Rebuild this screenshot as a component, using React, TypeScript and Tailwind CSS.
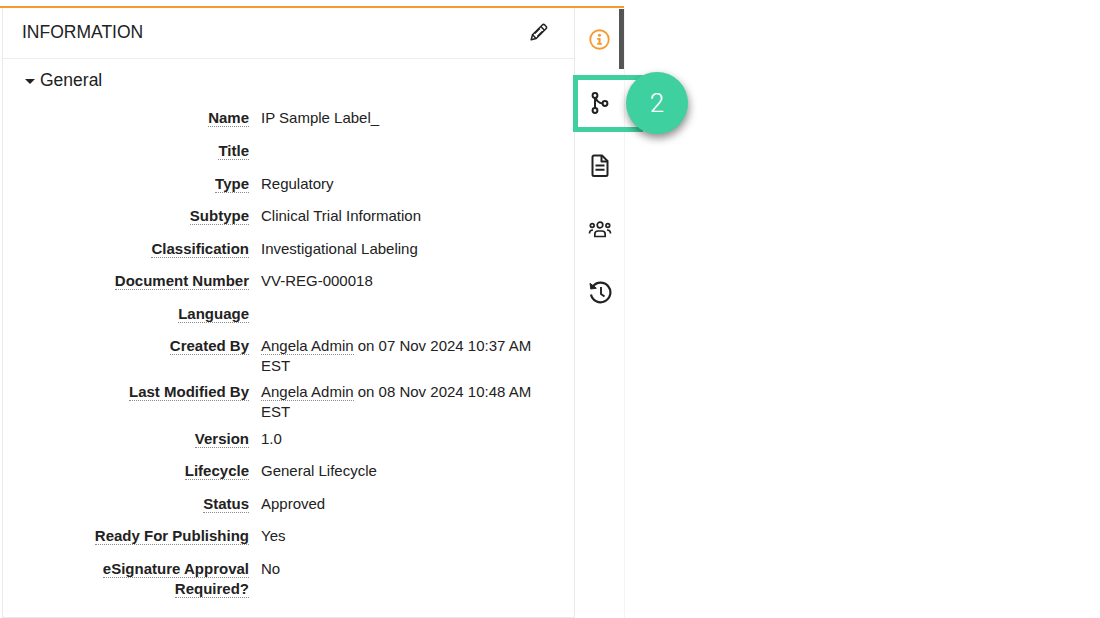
import { Fragment } from 'react'

type Field = { label: string; value?: string; owner?: string; tail?: string }

const fields: Field[] = [
  { label: 'Name', value: 'IP Sample Label_' },
  { label: 'Title' },
  { label: 'Type', value: 'Regulatory' },
  { label: 'Subtype', value: 'Clinical Trial Information' },
  { label: 'Classification', value: 'Investigational Labeling' },
  { label: 'Document Number', value: 'VV-REG-000018' },
  { label: 'Language' },
  { label: 'Created By', owner: 'Angela Admin', tail: ' on 07 Nov 2024 10:37 AM EST' },
  { label: 'Last Modified By', owner: 'Angela Admin', tail: ' on 08 Nov 2024 10:48 AM EST' },
  { label: 'Version', value: '1.0' },
  { label: 'Lifecycle', value: 'General Lifecycle' },
  { label: 'Status', value: 'Approved' },
  { label: 'Ready For Publishing', value: 'Yes' },
  { label: 'eSignature Approval Required?', value: 'No' },
]

const dotted = 'border-b border-dotted border-[#8a8a8a]'

function InfoIcon() {
  return (
    <svg width="21" height="21" viewBox="0 0 22 22" fill="none">
      <circle cx="11" cy="11" r="9.700" stroke="#f59a2f" strokeWidth="1.900" />
      <circle cx="11" cy="6.600" r="1.600" fill="#f59a2f" />
      <path d="M8.600 9.400h3.500v5.200h1.400v1.800H8.600v-1.800h1.300v-3.400H8.600z" fill="#f59a2f" />
    </svg>
  )
}

function BranchIcon() {
  return (
    <svg width="18" height="22" viewBox="0 0 18 22" fill="none" stroke="#222" strokeWidth="2">
      <circle cx="4" cy="3.500" r="2.400" />
      <circle cx="4" cy="18.500" r="2.400" />
      <circle cx="14" cy="11.500" r="2.400" />
      <path d="M4 5.900v10.200" />
      <path d="M4.800 6c.8 2.800 2.800 4.800 6.800 5.500" />
    </svg>
  )
}

function DocIcon() {
  return (
    <svg width="18" height="23" viewBox="0 0 18 23" fill="none" stroke="#222" strokeWidth="2" strokeLinejoin="round">
      <path d="M3 1.500h8l5.500 5.500v13.500a1.500 1.500 0 0 1-1.500 1.500H3a1.500 1.500 0 0 1-1.500-1.500V3A1.500 1.500 0 0 1 3 1.500z" />
      <path d="M10.500 1.500v6h6" />
      <path d="M4.500 11.500h9M4.500 15.700h9" />
    </svg>
  )
}

function UsersIcon() {
  return (
    <svg width="24" height="18" viewBox="0 -1 24 18" fill="none" stroke="#222" strokeWidth="1.700">
      <circle cx="12" cy="4" r="2.800" />
      <circle cx="4.200" cy="4.500" r="1.900" />
      <circle cx="19.800" cy="4.500" r="1.900" />
      <path d="M6.800 15.500v-2.300c0-2 1.500-3.200 3.400-3.200h3.600c1.900 0 3.400 1.200 3.400 3.200v2.300z" strokeLinejoin="round" />
      <path d="M1.500 12.500c0-2 1.200-3.500 3.500-3.500M22.500 12.500c0-2-1.200-3.500-3.500-3.500" />
    </svg>
  )
}

function HistoryIcon() {
  return (
    <svg width="24" height="24" viewBox="0 -0.500 24 24" fill="none" stroke="#222" strokeWidth="2.200">
      <path d="M4.800 6A9.800 9.800 0 1 1 3 14" />
      <path d="M2 2.800l.8 5.700 5.500-.8z" fill="#222" strokeWidth="1" strokeLinejoin="round" />
      <path d="M13 6.500v7l3.500 2.500" strokeWidth="1.900" />
    </svg>
  )
}

function PencilIcon() {
  return (
    <svg width="18" height="18" viewBox="0 0 18 18" fill="none" stroke="#222" strokeWidth="1.500" strokeLinejoin="round">
      <path d="M1.200 16.800l1.300-5L12.300 2a1.800 1.800 0 0 1 2.500 0l1.200 1.200a1.800 1.800 0 0 1 0 2.500L6.200 15.500z" />
      <path d="M2.500 11.800l3.700 3.700M10.800 3.500l3.700 3.700M4.800 10.500l5-5M7.500 13.200l5-5" />
    </svg>
  )
}

export default function App() {
  return (
    <div className="relative h-[618px] w-[1100px] overflow-hidden bg-white pt-[6px] font-['Liberation_Sans',Arial,sans-serif] text-[#222]">
      <div className="flex h-[612px] w-[624px] border-t-2 border-[#f59a2f]">
        <div className="ml-[2px] flex h-[610px] w-[573px] flex-col border-x border-b border-[#e9e9e9]">
          <div className="flex h-[51px] shrink-0 items-center justify-between border-b border-[#ececec] pl-[19px] pr-[26px]">
            <h2 className="pb-[2px] text-[17.500px] leading-[24px]">INFORMATION</h2>
            <button className="mb-[3px]"><PencilIcon /></button>
          </div>
          <div className="flex items-center pl-[22px] pt-[9px]">
            <span className="mr-[5px] mt-[3px] h-0 w-0 border-x-[5px] border-t-[5px] border-x-transparent border-t-[#222]" />
            <span className="text-[17.500px] leading-[24px]">General</span>
          </div>
          <div className="mt-[16px] grid grid-cols-[246px_1fr] text-[15px] leading-[20px]">
            {fields.map(f => (
              <Fragment key={f.label}>
                <div className={`pl-[80px] text-right font-bold ${f.label === 'Name' ? 'pb-[13px]' : 'pb-[12.500px]'}`}>
                  <span className={dotted}>{f.label}</span>
                </div>
                <div className={`pl-[12px] pr-[30px] ${f.label === 'Created By' ? 'pb-[6px]' : 'pb-[6.500px]'}`}>
                  {f.owner && <span className={dotted}>{f.owner}</span>}
                  {f.tail}
                  {f.value}
                </div>
              </Fragment>
            ))}
          </div>
        </div>
        <div className="flex w-[49px] flex-col shadow-[1px_0_0_#f4f4f4]">
          <div className="flex h-[63px] items-center justify-center"><InfoIcon /></div>
          <div className="flex h-[63px] items-center justify-center"><BranchIcon /></div>
          <div className="flex h-[63px] items-center justify-center"><DocIcon /></div>
          <div className="flex h-[63px] items-center justify-center"><UsersIcon /></div>
          <div className="flex h-[63px] items-center justify-center"><HistoryIcon /></div>
        </div>
      </div>
      <div className="absolute left-[619px] top-[9px] h-[60px] w-[5px] bg-[#555]" />
      <div className="absolute left-[573px] top-[75px] h-[57px] w-[70px] border-[5px] border-[#3fd0a0]" />
      <div className="absolute left-[626px] top-[72px] flex h-[62px] w-[62px] items-center justify-center rounded-full bg-[#3fd0a0] font-['Roboto',sans-serif] text-[26px] font-light text-white shadow-[1px_4px_8px_rgba(0,0,0,0.45)]">
        2
      </div>
    </div>
  )
}
